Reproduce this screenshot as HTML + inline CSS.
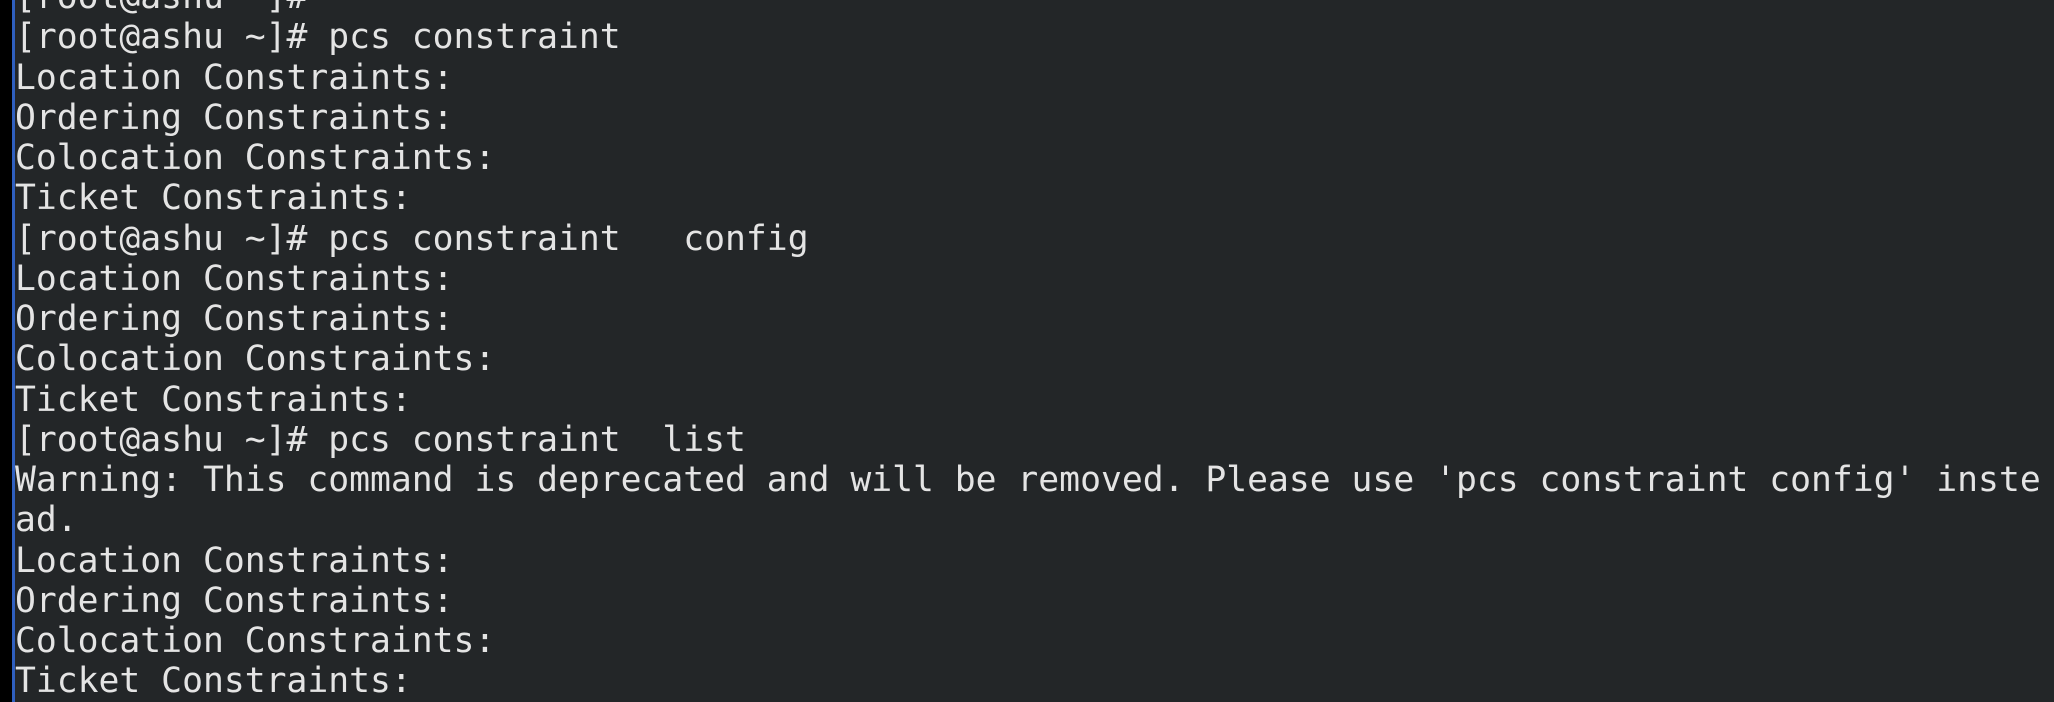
<!DOCTYPE html>
<html><head><style>
html,body{margin:0;padding:0;width:2054px;height:702px;overflow:hidden;background:#232628;}
.l{position:absolute;left:0;top:0;width:12px;height:702px;background:#000;}
.b{position:absolute;left:12px;top:0;width:3px;height:702px;background:#2f5fbf;}
pre{position:absolute;left:15px;top:-23px;margin:0;font-family:"DejaVu Sans Mono","Liberation Mono",monospace;font-size:34.7px;line-height:40.25px;color:#e4e4e4;white-space:pre;}
</style></head><body>
<div class="l"></div><div class="b"></div>
<pre>[root@ashu ~]#
[root@ashu ~]# pcs constraint
Location Constraints:
Ordering Constraints:
Colocation Constraints:
Ticket Constraints:
[root@ashu ~]# pcs constraint   config
Location Constraints:
Ordering Constraints:
Colocation Constraints:
Ticket Constraints:
[root@ashu ~]# pcs constraint  list
Warning: This command is deprecated and will be removed. Please use 'pcs constraint config' inste
ad.
Location Constraints:
Ordering Constraints:
Colocation Constraints:
Ticket Constraints:</pre>
</body></html>
